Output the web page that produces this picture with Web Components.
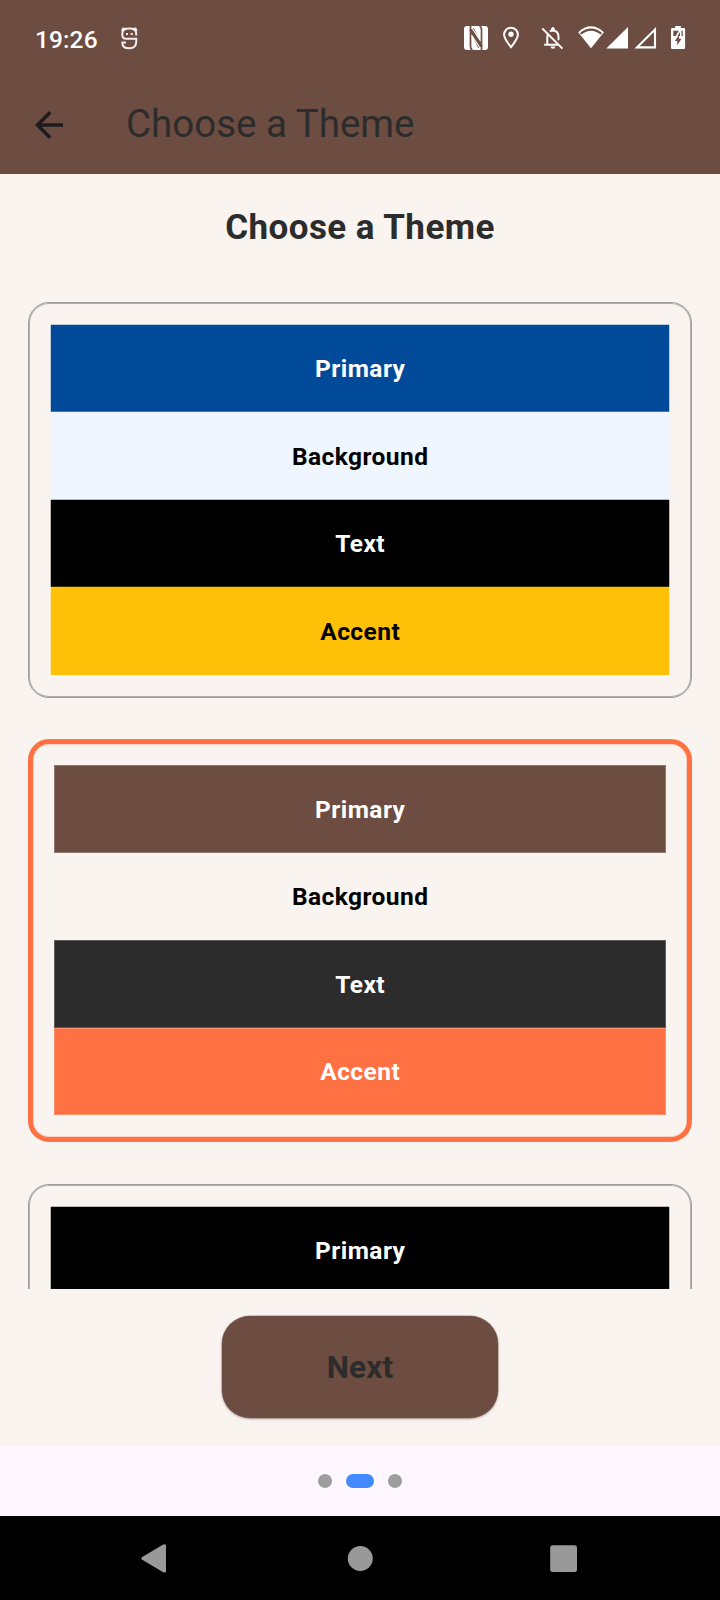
<!DOCTYPE html>
<html lang="en">
<head>
<meta charset="utf-8">
<title>Choose a Theme</title>
<style>
html, body { margin: 0; height: 100%; }
body { font-family: Roboto, "Liberation Sans", sans-serif; background: #fef7ff; overflow: hidden; }
</style>
</head>
<body>
<phone-screen>
  <status-bar slot="top" time="19:26"></status-bar>
  <app-bar slot="top">Choose a Theme</app-bar>
  <span slot="heading">Choose a Theme</span>
  <theme-card>
    <theme-swatch label="Primary" color="#004a99" ink="#fff"></theme-swatch>
    <theme-swatch label="Background" color="#eff6ff" ink="#000"></theme-swatch>
    <theme-swatch label="Text" color="#000000" ink="#fff"></theme-swatch>
    <theme-swatch label="Accent" color="#ffc107" ink="#000"></theme-swatch>
  </theme-card>
  <theme-card selected>
    <theme-swatch label="Primary" color="#6d4c41" ink="#fff"></theme-swatch>
    <theme-swatch label="Background" color="#f9f4ef" ink="#000"></theme-swatch>
    <theme-swatch label="Text" color="#2c2c2c" ink="#fff"></theme-swatch>
    <theme-swatch label="Accent" color="#ff7043" ink="#fff"></theme-swatch>
  </theme-card>
  <theme-card>
    <theme-swatch label="Primary" color="#000000" ink="#fff"></theme-swatch>
  </theme-card>
  <next-button slot="action">Next</next-button>
  <page-dots slot="bottom"></page-dots>
  <nav-bar slot="bottom"></nav-bar>
</phone-screen>

<script>
class Base extends HTMLElement {
  connectedCallback() {
    if (this.shadowRoot) return;
    this.attachShadow({ mode: 'open' }).innerHTML = this.render();
  }
}

customElements.define('phone-screen', class extends Base {
  render() { return `
    <style>
      :host { display: flex; flex-direction: column; width: 720px; height: 1600px; background: #f9f4ef; color: #2c2c2c; }
      h1 { margin: 0; height: 128px; box-sizing: border-box; padding-top: 33px; text-align: center;
           font-size: 35px; line-height: 41px; font-weight: 700; letter-spacing: 0.4375px; }
      main { flex: 1 1 0; min-height: 0; overflow: hidden; }
      .list { display: flex; flex-direction: column; gap: 41.75px; padding: 0 28px; }
      footer { flex: none; height: 157px; box-sizing: border-box; padding-top: 27.25px; display: flex; justify-content: center; align-items: flex-start; }
    </style>
    <slot name="top"></slot>
    <main><h1><slot name="heading"></slot></h1><div class="list"><slot></slot></div></main>
    <footer><slot name="action"></slot></footer>
    <slot name="bottom"></slot>`; }
});

customElements.define('status-bar', class extends Base {
  render() { return `
    <style>
      :host { display: flex; height: 76px; box-sizing: border-box; padding: 25px 34px 0 35px; background: #6d4c41; color: #fff; align-items: flex-start; }
      .time { font-size: 24.5px; line-height: 29px; font-weight: 500; letter-spacing: .1px; }
      svg { display: block; flex: none; }
      .face { margin-left: 21px; }
      .icons { margin-left: auto; display: flex; }
    </style>
    <span class="time">${this.getAttribute('time')}</span>
    <svg class="face" width="20" height="26" viewBox="119 25 20 26" fill="none" stroke="#fff" stroke-opacity=".9" stroke-width="2" stroke-linejoin="round">
      <path d="M136.2 35.5V33.5Q136.2 28.6 129.3 28.6Q122.3 28.6 122.3 33.5V35Q122.3 38.7 126 38.7H136.3V41Q136.3 48.3 129.3 48.3Q122.3 48.3 122.3 42.4H126"/>
      <path d="M122 31L123 28.5L125.5 29M136.5 31L135.6 28.5L133 29"/>
      <path d="M126 34H128M130.7 34H132.7"/>
    </svg>
    <div class="icons">
      <svg width="40" height="26" viewBox="463 25 40 26">
        <rect x="464" y="26" width="24" height="24" rx="3" fill="#fff"/>
        <g fill="none" stroke="#6d4c41" stroke-linejoin="round">
          <path d="M470.5 26V46Q470.5 49.3 472.5 50M481.5 50V30Q481.5 26.7 479.5 26" stroke-width="1.7"/>
          <path d="M471.5 29L480.5 47" stroke-width="5"/>
          <path d="M472 28L480.2 40.5M471.8 35.5L480 48" stroke="#fff" stroke-width="1.2"/>
        </g>
      </svg>
      <svg width="38" height="26" viewBox="503 25 38 26" fill="none" stroke="#fff" stroke-width="2">
        <path d="M511 47.2C507.6 43 504.1 38.7 504.1 34.6A6.9 6.9 0 0 1 517.9 34.6C517.9 38.7 514.4 43 511 47.2Z"/>
        <circle cx="511" cy="34.3" r="2.7" fill="#fff" stroke="none"/>
      </svg>
      <svg width="37" height="26" viewBox="541 25 37 26" fill="none" stroke="#fff" stroke-width="2">
        <path d="M542.3 28.5L562.5 48.6"/>
        <path d="M544.2 44.8H558M547.3 44V37Q547.3 34.7 548.4 33.3M549.8 31.4Q551.2 30.6 552.9 30.6Q558.5 31 558.5 37V40.2"/>
        <path d="M551.5 30.5V29A1.4 1.4 0 0 1 554.3 29V30.5Z" fill="#fff" stroke-width="1"/>
        <path d="M550.6 46.5H555.2A2.3 2.3 0 0 1 550.6 46.5Z" fill="#fff" stroke="none"/>
      </svg>
      <svg width="28" height="26" viewBox="578 25 28 26">
        <path d="M578.2 32.3Q591 20.4 603.9 32.3L591 48.2Z" fill="#fff"/>
        <path d="M580.6 33.7Q591 25.4 601.4 33.7" fill="none" stroke="#6d4c41" stroke-width="2.1"/>
      </svg>
      <svg width="28" height="26" viewBox="606 25 28 26"><path d="M606.3 48.5L628 27V48.5Z" fill="#fff"/></svg>
      <svg width="37" height="26" viewBox="634 25 37 26"><path d="M636.9 47.4L655 29.5V47.4Z" fill="none" stroke="#fff" stroke-width="2.1"/></svg>
      <svg width="15" height="26" viewBox="671 25 15 26">
        <path d="M675.1 26H680.8V28H684Q685.1 28 685.1 29.2V47.8Q685.1 49 684 49H672.2Q671 49 671 47.8V29.2Q671 28 672.2 28H675.1Z" fill="#fff"/>
        <path d="M673.3 30.7H682.8V36H673.3Z" fill="#6d4c41"/>
        <path d="M680.2 30L674.5 39.5M680.8 30V36.5" fill="none" stroke="#fff" stroke-width="1.5"/>
        <path d="M679 35L674.9 41H677.3V45.4L681.4 38.8H679Z" fill="#6d4c41"/>
      </svg>
    </div>`; }
});

customElements.define('app-bar', class extends Base {
  render() { return `
    <style>
      :host { display: flex; align-items: center; height: 98px; box-sizing: border-box; background: #6d4c41; color: #2c2c2c; padding: 0 28px; gap: 56px;
              font-size: 38.5px; line-height: 49px; }
      svg { display: block; width: 42px; height: 42px; }
      span { padding-bottom: 4px; }
    </style>
    <svg viewBox="0 0 24 24" fill="#1d1b20"><path d="M20 11H7.83l5.59-5.59L12 4l-8 8 8 8 1.41-1.41L7.83 13H20v-2z"/></svg>
    <span><slot></slot></span>`; }
});

customElements.define('theme-card', class extends Base {
  render() { return `
    <style>
      :host { display: block; border: 1px solid #9e9e9e; border-radius: 21px; padding: 21.75px; box-shadow: inset 0 0 0 1px #b0aeac; }
      :host([selected]) { border: 5px solid #ff7043; padding: 21px 21px 21.5px; margin-bottom: .5px; box-shadow: inset 0 0 0 1px #fbd3c4;
        --edge: inset 0 0 0 1px #f9f4ef40; }
    </style>
    <slot></slot>`; }
});

customElements.define('theme-swatch', class extends Base {
  render() {
    const c = this.getAttribute('color');
    return `
    <style>
      :host { display: flex; align-items: center; justify-content: center; height: 87.5px;
              font-size: 24.5px; line-height: 35px; font-weight: 700; letter-spacing: 0.4375px;
              background: ${c}; color: ${this.getAttribute('ink')};
              box-shadow: var(--edge, -1px 0 0 ${c}40, 1px 0 0 ${c}40, 0 -1px 0 ${c}40); }
      span { padding-left: .4px; }
    </style>
    <span>${this.getAttribute('label')}</span>`; }
});

customElements.define('next-button', class extends Base {
  render() { return `
    <style>
      :host { display: block; }
      button { display: block; width: 276px; height: 102px; padding: 0; border: 0; border-radius: 28px; background: #6d4c41; color: #2c2c2c;
               font: 700 31.5px/45px Roboto, sans-serif; letter-spacing: 0.175px; box-shadow: 0 0 0 .5px #6d4c4180, 0 1px 3px rgba(0,0,0,.3); }
    </style>
    <button><slot></slot></button>`; }
});

customElements.define('page-dots', class extends Base {
  render() { return `
    <style>
      :host { display: flex; flex: none; height: 70px; gap: 14px; align-items: center; justify-content: center; background: #fef7ff; }
      i { width: 14px; height: 14px; border-radius: 7px; background: #9e9e9e; }
      i.on { width: 28px; background: #448aff; }
    </style>
    <i></i><i class="on"></i><i></i>`; }
});

customElements.define('nav-bar', class extends Base {
  render() { return `
    <style>
      :host { display: flex; flex: none; height: 84px; box-sizing: border-box; background: #000; padding: 27px 142px 0 140px; justify-content: space-between; align-items: flex-start; }
      svg { display: block; fill: #999; }
    </style>
    <svg width="28" height="32" viewBox="140 1543 28 32"><path d="M141.8 1557.3L163.2 1544.6Q166 1543.6 166 1546V1571Q166 1573.2 163.2 1572.2L141.8 1559.5Q140.6 1558.4 141.8 1557.3Z"/></svg>
    <svg width="28" height="32" viewBox="345 1543 28 32"><circle cx="360.3" cy="1558.5" r="12.5"/></svg>
    <svg width="28" height="32" viewBox="550 1543 28 32"><rect x="550.2" y="1545.2" width="26.8" height="26.8" rx="2.5"/></svg>`; }
});
</script>
</body>
</html>
